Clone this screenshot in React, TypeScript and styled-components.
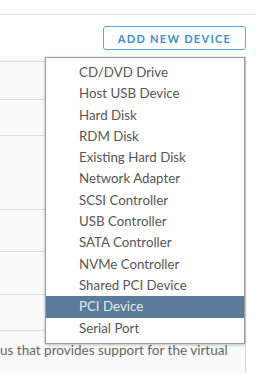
import React from "react";
import styled, { createGlobalStyle } from "styled-components";

const GlobalStyle = createGlobalStyle`
    html, body {
        margin: 0;
        padding: 0;
        background: #ffffff;
        font-family: Lato, "Open Sans", sans-serif;
        overflow: hidden;
    }
`;

const Page = styled.div`
    position: relative;
    width: 274px;
    height: 373px;
    overflow: hidden;
`;

const Header = styled.div`
    width: 255px;
    height: 14px;
    border-bottom: 1px solid #e3e3e3;
`;

const Toolbar = styled.div`
    display: flex;
    justify-content: flex-end;
    width: 246px;
    padding-top: 11px;
    height: 32px;
    box-sizing: border-box;
`;

const AddButton = styled.button`
    width: 143px;
    height: 24px;
    box-sizing: border-box;
    border: 1px solid #5aa6e3;
    border-radius: 3px;
    background: #ffffff;
    color: #3b8fcb;
    font-family: Lato, "Open Sans", sans-serif;
    font-size: 11px;
    font-weight: 700;
    letter-spacing: 1.3px;
    text-transform: uppercase;
    padding: 0;
`;

const Panel = styled.div`
    width: 245px;
    height: 317px;
    margin-top: 9px;
    background: #fafafa;
    border-right: 1px solid #d7d7d7;
`;

const PanelRow = styled.div<{ $height: number }>`
    height: ${p => p.$height}px;
    border-bottom: 1px solid #dedede;
    box-sizing: border-box;
`;

const Description = styled.div`
    padding-top: 11px;
    line-height: 16px;
    font-family: Lato, "Open Sans", sans-serif;
    font-size: 13.5px;
    color: #666666;
    white-space: nowrap;
`;

const Menu = styled.ul`
    position: absolute;
    left: 45px;
    top: 57px;
    width: 200px;
    margin: 0;
    padding: 4px 0;
    list-style: none;
    box-sizing: border-box;
    background: #ffffff;
    border: 1px solid #9a9a9a;
    box-shadow: 0 1px 3px rgba(0, 0, 0, 0.25);
`;

const MenuItem = styled.li<{ $active?: boolean }>`
    height: 21.3px;
    line-height: 21.3px;
    padding-left: 33px;
    font-size: 13.3px;
    color: ${p => (p.$active ? "#e4e9ef" : "#565656")};
    background: ${p => (p.$active ? "#5b7b9a" : "transparent")};
`;

const devices = [
    "CD/DVD Drive",
    "Host USB Device",
    "Hard Disk",
    "RDM Disk",
    "Existing Hard Disk",
    "Network Adapter",
    "SCSI Controller",
    "USB Controller",
    "SATA Controller",
    "NVMe Controller",
    "Shared PCI Device",
    "PCI Device",
    "Serial Port",
];

// row heights of the settings list behind the menu
const rows = [6, 38, 36, 74, 42, 43, 36];

export default function App() {
    return (
        <Page>
            <GlobalStyle />
            <Header />
            <Toolbar>
                <AddButton>Add New Device</AddButton>
            </Toolbar>
            <Panel>
                {rows.map((h, i) => (
                    <PanelRow key={i} $height={h} />
                ))}
                <Description>us that provides support for the virtual</Description>
            </Panel>
            <Menu>
                {devices.map(name => (
                    <MenuItem key={name} $active={name === "PCI Device"}>
                        {name}
                    </MenuItem>
                ))}
            </Menu>
        </Page>
    );
}
